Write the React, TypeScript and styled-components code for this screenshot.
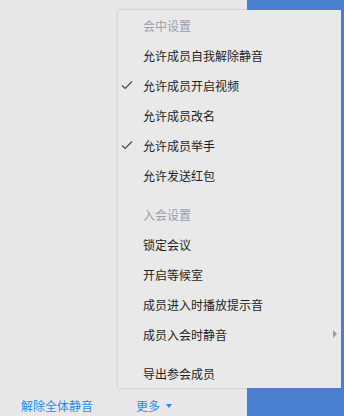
import React from "react";
import styled, { createGlobalStyle } from "styled-components";

const GlobalStyle = createGlobalStyle`
  html, body {
    margin: 0;
    padding: 0;
    background: #e8e8e8;
  }
  body {
    font-family: "Noto Sans CJK SC", "Liberation Sans", sans-serif;
  }
`;

const Shell = styled.div`
  position: relative;
  width: 344px;
  height: 416px;
  display: flex;
  overflow: hidden;
  background: #e8e8e8;
`;

const LeftPane = styled.div`
  width: 247px;
  display: flex;
  flex-direction: column;
  justify-content: flex-end;
`;

const BluePane = styled.div`
  flex: 1;
  background: #4a7fd0;
`;

const Toolbar = styled.div`
  height: 18px;
  padding: 0 0 1px 21px;
  display: flex;
  align-items: center;
  gap: 43px;
`;

const ToolButton = styled.span`
  display: inline-flex;
  align-items: center;
  gap: 6px;
  font-size: 12px;
  line-height: 14px;
  color: #1c8df2;
  cursor: pointer;
`;

const Caret = styled.span`
  width: 0;
  height: 0;
  border-left: 3px solid transparent;
  border-right: 3px solid transparent;
  border-top: 4px solid #1c8df2;
`;

const Menu = styled.div`
  position: absolute;
  left: 118px;
  top: 10px;
  width: 223px;
  background: #e9e9e9;
  box-shadow: 0 0 2px rgba(110, 110, 150, 0.45);
  display: flex;
  flex-direction: column;
`;

const Row = styled.div<{ $header?: boolean }>`
  position: relative;
  height: 30px;
  padding-left: 25px;
  display: flex;
  align-items: center;
  font-size: 12px;
  color: ${(p) => (p.$header ? "#9d9dac" : "#1e1e22")};
  cursor: ${(p) => (p.$header ? "default" : "pointer")};
`;

const Gap = styled.div`
  height: 9px;
`;

const Check = styled.svg`
  position: absolute;
  left: 3px;
  top: 10px;
`;

const SubArrow = styled.span`
  position: absolute;
  right: 4px;
  top: 11px;
  width: 0;
  height: 0;
  border-top: 4px solid transparent;
  border-bottom: 4px solid transparent;
  border-left: 4px solid #8c9dc6;
`;

type Item = { label: string; header?: boolean; checked?: boolean; sub?: boolean };

const groups: Item[][] = [
  [
    { label: "会中设置", header: true },
    { label: "允许成员自我解除静音" },
    { label: "允许成员开启视频", checked: true },
    { label: "允许成员改名" },
    { label: "允许成员举手", checked: true },
    { label: "允许发送红包" },
  ],
  [
    { label: "入会设置", header: true },
    { label: "锁定会议" },
    { label: "开启等候室" },
    { label: "成员进入时播放提示音" },
    { label: "成员入会时静音", sub: true },
  ],
  [{ label: "导出参会成员" }],
];

function MenuRow({ item }: { item: Item }) {
  return (
    <Row $header={item.header}>
      {item.checked && (
        <Check width="12" height="10" viewBox="0 0 12 10">
          <path d="M1 5.5 L4.2 8.5 L11 1.5" fill="none" stroke="#4a4a58" strokeWidth="1.2" />
        </Check>
      )}
      {item.label}
      {item.sub && <SubArrow />}
    </Row>
  );
}

export default function App() {
  return (
    <Shell>
      <GlobalStyle />
      <LeftPane>
        <Toolbar>
          <ToolButton>解除全体静音</ToolButton>
          <ToolButton>
            更多
            <Caret />
          </ToolButton>
        </Toolbar>
      </LeftPane>
      <BluePane />
      <Menu>
        {groups.map((g, gi) => (
          <React.Fragment key={gi}>
            {gi > 0 && <Gap />}
            {g.map((item) => (
              <MenuRow key={item.label} item={item} />
            ))}
          </React.Fragment>
        ))}
      </Menu>
    </Shell>
  );
}
